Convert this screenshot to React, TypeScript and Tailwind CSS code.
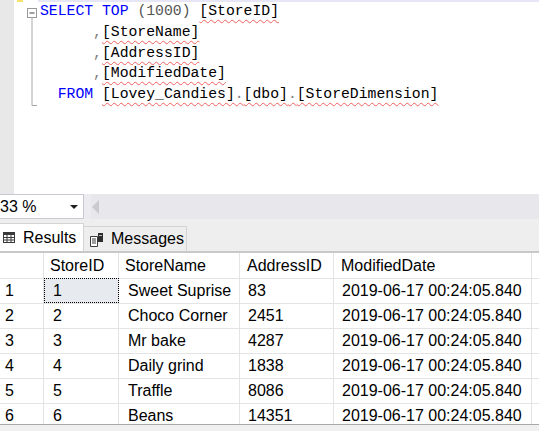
import React from 'react';

const sans = { fontFamily: '"Liberation Sans", Arial, sans-serif' };
const mono = { fontFamily: '"Liberation Mono", "DejaVu Sans Mono", monospace' };

const rows = [
    { id: 1, name: 'Sweet Suprise', addr: '83' },
    { id: 2, name: 'Choco Corner', addr: '2451' },
    { id: 3, name: 'Mr bake', addr: '4287' },
    { id: 4, name: 'Daily grind', addr: '1838' },
    { id: 5, name: 'Traffle', addr: '8086' },
    { id: 6, name: 'Beans', addr: '14351' },
];

const squiggle = 'underline decoration-wavy decoration-[#f26060] decoration-1 underline-offset-[4px]';

function Outline() {
    return (
        <svg width="26" height="194" className="shrink-0">
            <rect x="3" y="0" width="6" height="2" fill="#f3e36a" />
            <rect x="13.5" y="8.5" width="9" height="9" fill="#fff" stroke="#9a9a9a" />
            <line x1="15.5" y1="13" x2="20.5" y2="13" stroke="#3c3c3c" />
            <line x1="18" y1="18" x2="18" y2="105.5" stroke="#a8a8a8" />
            <line x1="18" y1="105.5" x2="23" y2="105.5" stroke="#a8a8a8" />
        </svg>
    );
}

function ResultsIcon() {
    return (
        <svg width="12" height="11" viewBox="0 0 12 11" className="shrink-0">
            <rect x="0.5" y="0.5" width="11" height="10" fill="#fff" stroke="#3a3a3a" />
            <rect x="0.5" y="0.5" width="11" height="2.5" fill="#3a3a3a" />
            <line x1="4" y1="3" x2="4" y2="10.5" stroke="#3a3a3a" />
            <line x1="8" y1="3" x2="8" y2="10.5" stroke="#3a3a3a" />
            <line x1="0.5" y1="5.5" x2="11.5" y2="5.5" stroke="#3a3a3a" />
            <line x1="0.5" y1="8" x2="11.5" y2="8" stroke="#3a3a3a" />
        </svg>
    );
}

function MessagesIcon() {
    return (
        <svg width="15" height="15" viewBox="0 0 15 15" className="shrink-0">
            <path d="M1.5 4.5 H8.5 V14.5 H1.5 Z" fill="#fff" stroke="#3a3a3a" />
            <line x1="3" y1="7" x2="7" y2="7" stroke="#3a3a3a" />
            <line x1="3" y1="9" x2="7" y2="9" stroke="#3a3a3a" />
            <line x1="3" y1="11" x2="7" y2="11" stroke="#3a3a3a" />
            <rect x="9" y="1" width="5" height="9" fill="#2e2e2e" />
            <rect x="10" y="3" width="3" height="1" fill="#bdbdbd" />
        </svg>
    );
}

export default function App() {
    const kw = 'text-[#0000ff]';
    const gray = 'text-[#808080]';

    return (
        <div className="w-[539px] h-[431px] overflow-hidden flex flex-col bg-white" style={sans}>
            {/* editor */}
            <div className="h-[194px] flex shrink-0">
                <div className="w-[14px] bg-[#e8e8e8]" />
                <div className="flex-1 flex relative">
                    <div className="absolute left-[24px] right-0 top-0 h-[2px] bg-[#e6e6f6]" />
                    <Outline />
                    <div className="pt-[1px] text-[14.75px] leading-[20.75px] text-black whitespace-pre" style={mono}>
                        <div>
                            <span className={kw}>SELECT</span> <span className={kw}>TOP</span> <span className="text-[#555555]">(1000)</span> <span className={squiggle}>[StoreID]</span>
                        </div>
                        <div>
                            {'      '}<span className={gray}>,</span><span className={squiggle}>[StoreName]</span>
                        </div>
                        <div>
                            {'      '}<span className={gray}>,</span><span className={squiggle}>[AddressID]</span>
                        </div>
                        <div>
                            {'      '}<span className={gray}>,</span><span className={squiggle}>[ModifiedDate]</span>
                        </div>
                        <div>
                            {'  '}<span className={kw}>FROM</span>{' '}
                            <span className={squiggle}>[Lovey_Candies]<span className={gray}>.</span>[dbo]<span className={gray}>.</span>[StoreDimension]</span>
                        </div>
                    </div>
                </div>
            </div>

            {/* zoom bar */}
            <div className="h-[25px] shrink-0 flex bg-[#e7e7ec]">
                <div className="w-[84px] h-[25px] bg-white border border-l-0 border-[#c9c9d4] flex items-center overflow-hidden">
                    <span className="text-[16px] text-black whitespace-nowrap">33 %</span>
                    <svg width="8" height="4" className="ml-auto mr-[5px]">
                        <path d="M0 0 H8 L4 4 Z" fill="#1e1e1e" />
                    </svg>
                </div>
                <div className="w-[7px] h-[25px] bg-[#ececf0]" />
                <svg width="8" height="14" className="mt-[6px] ml-[1px]">
                    <path d="M7 0 V14 L0 7 Z" fill="#cacace" />
                </svg>
            </div>

            {/* tabs */}
            <div className="h-[32px] shrink-0 flex items-end bg-[#eeeeee]">
                <div className="w-[84px] h-[28px] bg-white border-t border-r border-[#d4d4d4] flex items-center gap-[8px] pl-[3px]">
                    <ResultsIcon />
                    <span className="text-[16px] text-black">Results</span>
                </div>
                <div className="w-[103px] h-[25px] bg-[#eeeeee] border-t border-r border-[#d4d4d4] flex items-center gap-[7px] pl-[5px]">
                    <MessagesIcon />
                    <span className="text-[16px] text-black">Messages</span>
                </div>
            </div>

            {/* grid */}
            <div className="h-[173px] shrink-0 overflow-hidden border-t-2 border-[#c8c8c8] border-b-0">
                <div className="flex h-[26px] border-b border-[#e4e4e4] text-[16px] text-black">
                    <div className="w-[44px] border-r border-[#e4e4e4]" />
                    <div className="w-[75px] border-r border-[#e4e4e4] flex items-center pl-[6px]">StoreID</div>
                    <div className="w-[121px] border-r border-[#e4e4e4] flex items-center pl-[6px]">StoreName</div>
                    <div className="w-[94px] border-r border-[#e4e4e4] flex items-center pl-[7px]">AddressID</div>
                    <div className="w-[198px] border-r border-[#e4e4e4] flex items-center pl-[7px]">ModifiedDate</div>
                    <div className="flex-1" />
                </div>
                {rows.map((r, i) => (
                    <div key={r.id} className="flex h-[25px] border-b border-[#e4e4e4] text-[16px] text-black">
                        <div className="w-[44px] border-r border-[#e4e4e4] flex items-center pl-[5px]">{r.id}</div>
                        {i === 0 ? (
                            <div className="w-[75px] -mt-px h-[25px] bg-[#e7ebf0] border border-dotted border-black flex items-center pl-[8px]">{r.id}</div>
                        ) : (
                            <div className="w-[75px] border-r border-[#e4e4e4] flex items-center pl-[9px]">{r.id}</div>
                        )}
                        <div className="w-[121px] border-r border-[#e4e4e4] flex items-center pl-[9px]">{r.name}</div>
                        <div className="w-[94px] border-r border-[#e4e4e4] flex items-center pl-[8px]">{r.addr}</div>
                        <div className="w-[198px] border-r border-[#e4e4e4] flex items-center pl-[8px]">2019-06-17 00:24:05.840</div>
                        <div className="flex-1" />
                    </div>
                ))}
            </div>
            <div className="flex-1 border-t border-[#a9a9a9] bg-[#f0f0f0]" />
        </div>
    );
}
